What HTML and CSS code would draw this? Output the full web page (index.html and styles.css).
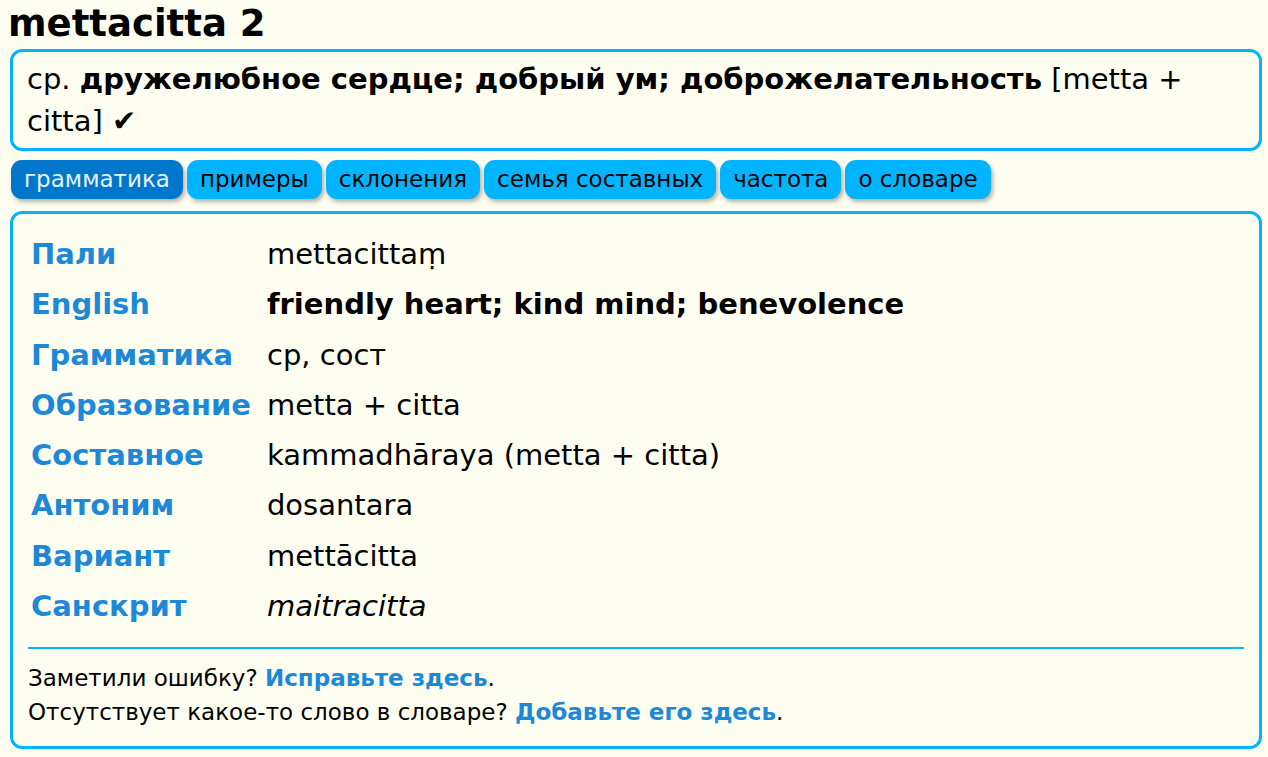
FILE: index.html
```html
<!DOCTYPE html>
<html lang="ru">
<head>
<meta charset="utf-8">
<title>mettacitta 2</title>
<link rel="stylesheet" href="styles.css">
</head>
<body>
<h1 class="title">mettacitta 2</h1>
<div class="summary">ср. <b>дружелюбное сердце; добрый ум; доброжелательность</b> [metta + citta] <b>✔</b></div>
<div class="tabs">
  <span class="tab active">грамматика</span>
  <span class="tab">примеры</span>
  <span class="tab">склонения</span>
  <span class="tab">семья составных</span>
  <span class="tab">частота</span>
  <span class="tab">о словаре</span>
</div>
<div class="panel">
  <table class="grammar">
    <tr><th>Пали</th><td>mettacittaṃ</td></tr>
    <tr><th>English</th><td><b>friendly heart; kind mind; benevolence</b></td></tr>
    <tr><th>Грамматика</th><td>ср, сост</td></tr>
    <tr><th>Образование</th><td>metta + citta</td></tr>
    <tr><th>Составное</th><td>kammadhāraya (metta + citta)</td></tr>
    <tr><th>Антоним</th><td>dosantara</td></tr>
    <tr><th>Вариант</th><td>mettācitta</td></tr>
    <tr><th>Санскрит</th><td><i>maitracitta</i></td></tr>
  </table>
  <hr class="rule">
  <p class="feedback">Заметили ошибку? <a href="#" class="link">Исправьте здесь</a>.<br>Отсутствует какое-то слово в словаре? <a href="#" class="link">Добавьте его здесь</a>.</p>
</div>
</body>
</html>
```
FILE: styles.css
```css
html, body {
  margin: 0;
  background: #fefef0;
  color: #000;
  font-family: "DejaVu Sans", sans-serif;
}
body {
  padding: 0 6px 0 8px;
}
.title {
  font-size: 37px;
  font-weight: bold;
  margin: 3px 0 4px 0;
  line-height: 42px;
}
.summary {
  margin-left: 2px;
  border: 3px solid #00b4ff;
  border-radius: 12px;
  padding: 6px 16px 6px 14px;
  font-size: 29px;
  line-height: 42px;
}
.tabs {
  display: flex;
  gap: 4px;
  margin: 9px 0 12px 3px;
}
.tab {
  background: #00b4ff;
  color: #000;
  font-size: 23px;
  line-height: 39px;
  padding: 0 13px;
  border-radius: 11px;
  box-shadow: 2px 3px 4px rgba(0,0,0,0.3);
}
.tab.active {
  background: #0077cc;
  color: #e6f4ff;
}
.panel {
  margin-left: 2px;
  border: 3px solid #00b4ff;
  border-radius: 12px;
  padding: 14px 15px 17px 15px;
}
.grammar {
  font-size: 29px;
}
.grammar th {
  text-align: left;
  color: #1e88d8;
  font-weight: bold;
  padding: 3px 13px 3px 1px;
  line-height: 42.3px;
}
.grammar td {
  padding: 3px 1px;
  line-height: 42.3px;
}
.rule {
  border: 0;
  border-top: 2px solid #00b4ff;
  margin: 15px 0 12px 0;
}
.feedback {
  margin: 0;
  font-size: 23px;
  line-height: 34px;
}
.link {
  color: #1e88d8;
  font-weight: bold;
  text-decoration: none;
}
```
